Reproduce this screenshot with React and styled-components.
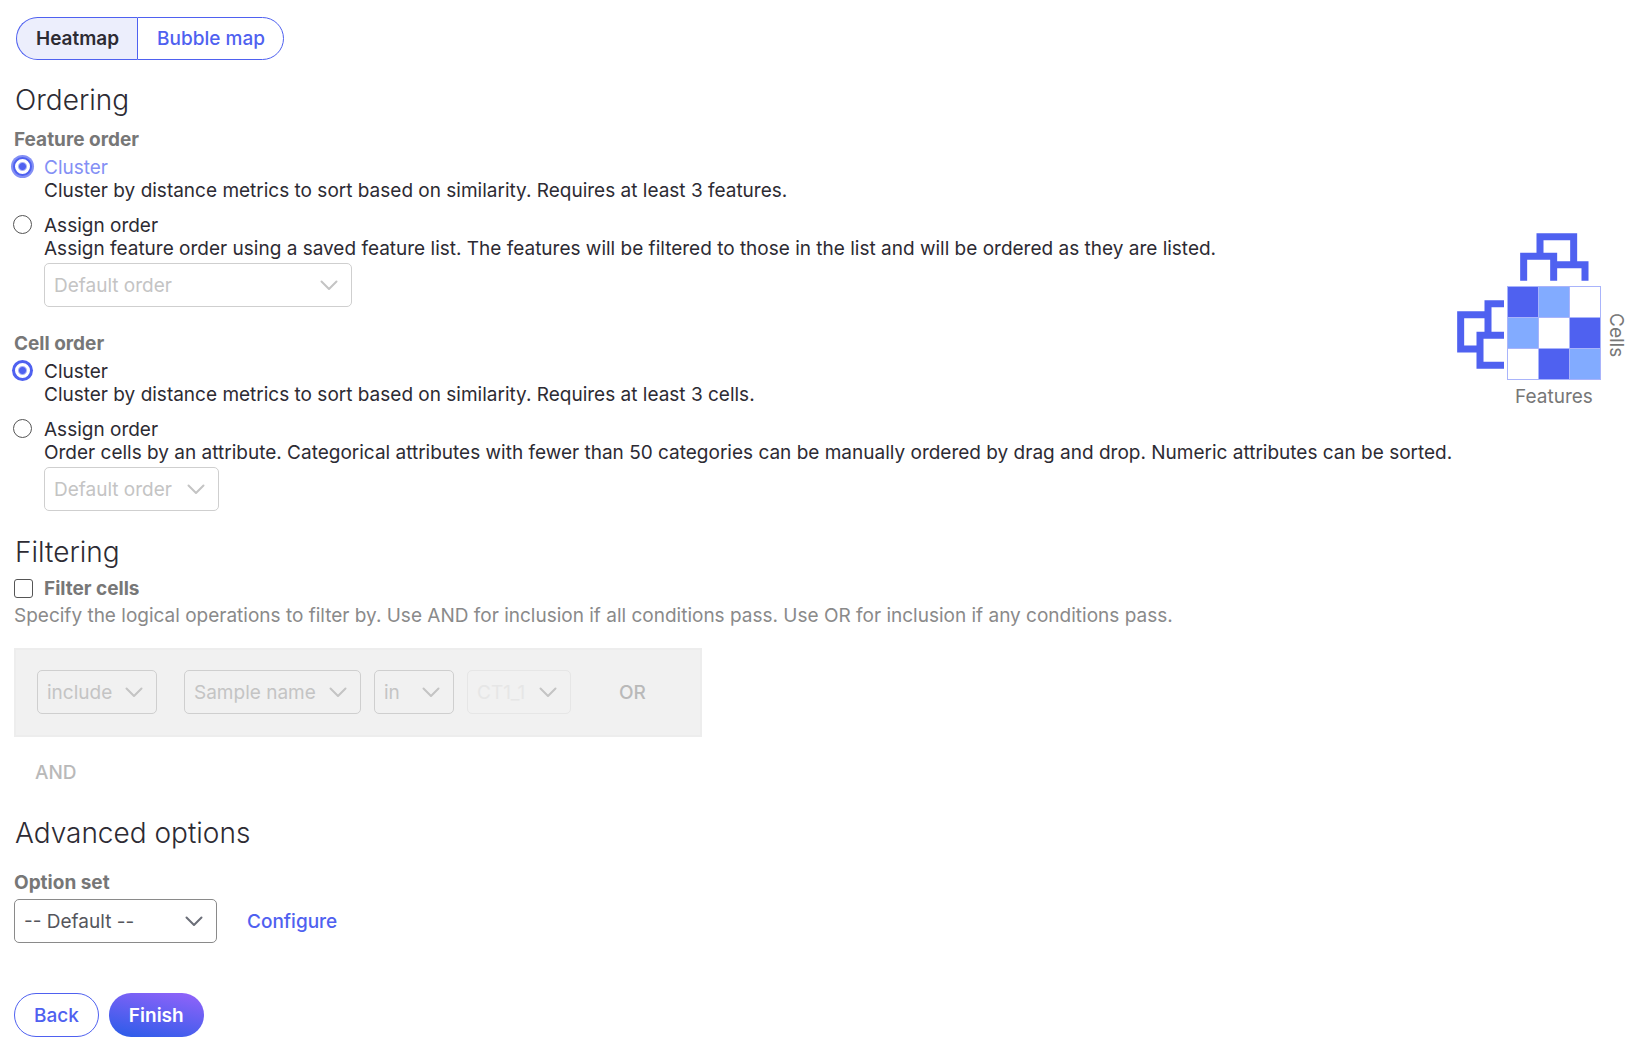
import React, { useState } from 'react';
import styled, { createGlobalStyle } from 'styled-components';

const GlobalStyle = createGlobalStyle`
  * {
    box-sizing: border-box;
  }
  body {
    background-color: #fff;
    color: #2d2b33;
    font-family: Inter, 'Liberation Sans', sans-serif;
    font-size: 19px;
    line-height: 23px;
    margin: 0;
  }
  button, select, input {
    font: inherit;
    margin: 0;
  }
`;

const Page = styled.main`
  padding: 17px 3px 6px 14px;
`;

const Segmented = styled.div`
  display: flex;
  margin-left: 2px;
`;

const Segment = styled.button`
  background-color: ${({ $active }) => ($active ? '#eceefc' : '#fff')};
  border: 1px solid #4f61f0;
  border-radius: ${({ $side }) => ($side === 'left' ? '22px 0 0 22px' : '0 22px 22px 0')};
  border-right-width: ${({ $side }) => ($side === 'left' ? '0' : '1px')};
  color: ${({ $active }) => ($active ? '#2d2b33' : '#4f61f0')};
  cursor: pointer;
  font-weight: ${({ $active }) => ($active ? 600 : 500)};
  height: 43px;
  padding: 0 18px 0 19px;
`;

const Title = styled.h2`
  font-size: 28px;
  font-weight: 300;
  line-height: 36px;
  margin: ${({ $top }) => $top}px 0 ${({ $bottom }) => $bottom || 0}px;
  padding-left: 1px;
`;

const Ordering = styled.section`
  align-items: center;
  display: flex;
  justify-content: space-between;
`;

const Group = styled.fieldset`
  border: 0;
  margin: 0 0 25px;
  min-width: 0;
  padding: 0;
  &:last-child {
    margin-bottom: 0;
  }
`;

const Legend = styled.legend`
  color: #777;
  font-weight: 700;
  margin-bottom: 5px;
  padding: 0;
`;

const Option = styled.div`
  column-gap: 11px;
  display: grid;
  grid-template-columns: 19px 1fr;
  & + & {
    margin-top: 12px;
  }
`;

const OptionLabel = styled.label`
  color: ${({ $focused }) => ($focused ? '#8490f5' : '#2d2b33')};
`;

const Radio = styled.input`
  appearance: none;
  background-color: #fff;
  border: 1px solid #555;
  border-radius: 50%;
  height: 19px;
  margin: 1px 0 0 -1px;
  width: 19px;
  &:checked {
    background-image: radial-gradient(circle, #4f61f0 3px, transparent 5px);
    border: 2px solid #4f61f0;
    box-shadow: 0 0 0 ${({ $focused }) => ($focused ? '2px #8490f5' : '1px #4f61f0')};
  }
`;

const OptionBody = styled.div`
  grid-column: 2;
`;

const Description = styled.p`
  margin: 0 0 3px;
`;

const SelectBox = styled.span`
  align-items: center;
  color: ${({ $muted }) => ($muted ? '#c4c4c4' : '#6b6e78')};
  display: inline-grid;
  width: ${({ $width }) => $width}px;
`;

const SelectInput = styled.select`
  appearance: none;
  background-color: transparent;
  border: 1px solid ${({ $tone }) => $tone.border};
  border-radius: 5px;
  color: ${({ $tone }) => $tone.text};
  grid-area: 1 / 1;
  height: 44px;
  opacity: 1;
  padding: 0 9px;
  width: 100%;
`;

const Chevron = styled.svg`
  fill: none;
  grid-area: 1 / 1;
  justify-self: end;
  margin-right: 14px;
  pointer-events: none;
  stroke: currentColor;
  stroke-linecap: round;
  stroke-linejoin: round;
  stroke-width: 2;
`;

const Figure = styled.figure`
  color: #777;
  column-gap: 4px;
  display: grid;
  flex: none;
  grid-template-columns: 144px 23px;
  margin: 2px 0 0;
  row-gap: 5px;
`;

const CellsAxis = styled.span`
  align-self: end;
  height: 90px;
  text-align: center;
  writing-mode: vertical-rl;
`;

const FeaturesAxis = styled.span`
  justify-self: end;
  text-align: center;
  width: 94px;
`;

const FilterToggle = styled.div`
  align-items: center;
  display: flex;
  gap: 11px;
`;

const FilterLabel = styled.label`
  color: #777;
  font-weight: 700;
`;

const Checkbox = styled.input`
  appearance: none;
  background-color: #fff;
  border: 1px solid #555;
  border-radius: 3px;
  height: 19px;
  width: 19px;
  &:checked {
    background-color: #4f61f0;
  }
`;

const Hint = styled.p`
  color: #8a8a8a;
  margin: 4px 0 21px;
`;

const Conditions = styled.div`
  align-items: center;
  background-color: #f1f1f1;
  border: 2px solid #ededed;
  display: flex;
  gap: 13px;
  max-width: 688px;
  padding: 20px 21px 21px;
`;

const Gap = styled.span`
  width: 1px;
`;

const LogicButton = styled.button`
  background: none;
  border: 0;
  color: #b9b9b9;
  font-weight: 500;
  padding: 0;
`;

const OrButton = styled(LogicButton)`
  margin-left: 35px;
`;

const AndButton = styled(LogicButton)`
  display: block;
  margin: 24px 0 0 21px;
`;

const FieldLabel = styled.label`
  color: #777;
  display: block;
  font-weight: 700;
  margin: 20px 0 5px;
`;

const FieldRow = styled.div`
  align-items: center;
  display: flex;
  gap: 30px;
`;

const Link = styled.a`
  color: #4f61f0;
  font-weight: 500;
  text-decoration: none;
`;

const Actions = styled.div`
  display: flex;
  gap: 10px;
  margin-top: 50px;
`;

const Action = styled.button`
  background: ${({ $primary }) => ($primary ? 'linear-gradient(192deg, #9563fa, #285ce8) border-box' : '#fff')};
  border: 1px solid ${({ $primary }) => ($primary ? 'transparent' : '#4f61f0')};
  border-radius: 22px;
  color: ${({ $primary }) => ($primary ? '#fff' : '#4f61f0')};
  cursor: pointer;
  font-weight: ${({ $primary }) => ($primary ? 600 : 500)};
  height: 44px;
  padding: 0 19px;
`;

const tones = {
  normal: { border: '#8a8a8a', text: '#55565c' },
  disabled: { border: '#cfcfcf', text: '#c4c4c4' },
  faint: { border: '#e6e6e6', text: '#e6e6e6' },
};

function Select({ id, label, value, width, tone = 'disabled' }) {
  return (
    <SelectBox $width={width} $muted={tone !== 'normal'}>
      <SelectInput id={id} aria-label={label} $tone={tones[tone]} disabled={tone !== 'normal'}>
        <option>{value}</option>
      </SelectInput>
      <Chevron width='18' height='11' viewBox='0 0 18 11' aria-hidden='true'>
        <path d='M1.5 1.5 9 9l7.5-7.5' />
      </Chevron>
    </SelectBox>
  );
}

function OrderGroup({ name, title, clusterText, assignText, selectWidth, highlight }) {
  const [order, setOrder] = useState('cluster');
  const focused = highlight && order === 'cluster';

  return (
    <Group>
      <Legend>{title}</Legend>
      <Option>
        <Radio
          type='radio'
          id={`${name}-cluster`}
          name={name}
          checked={order === 'cluster'}
          onChange={() => setOrder('cluster')}
          $focused={focused}
        />
        <OptionLabel htmlFor={`${name}-cluster`} $focused={focused}>Cluster</OptionLabel>
        <OptionBody>{clusterText}</OptionBody>
      </Option>
      <Option>
        <Radio
          type='radio'
          id={`${name}-assign`}
          name={name}
          checked={order === 'assign'}
          onChange={() => setOrder('assign')}
        />
        <OptionLabel htmlFor={`${name}-assign`}>Assign order</OptionLabel>
        <OptionBody>
          <Description>{assignText}</Description>
          <Select label={`${title} list`} value='Default order' width={selectWidth} />
        </OptionBody>
      </Option>
    </Group>
  );
}

function HeatmapFigure() {
  const dark = '#4f61f0';
  const light = '#82abff';
  const colors = [dark, light, '#fff', light, '#fff', dark, '#fff', dark, light];

  return (
    <Figure>
      <svg width='144' height='147' viewBox='78 69 432 441' aria-hidden='true'>
        <g fill='none' stroke={dark} strokeWidth='21'>
          <path d='M327 140V80H428V164' />
          <path d='M278 212V139H368V212' />
          <path d='M368 164H462V212' />
          <path d='M171 314H89V417H147' />
          <path d='M219 281H171V376' />
          <path d='M219 376H147V466H219' />
        </g>
        <rect x='228' y='228' width='282' height='282' fill='#a9b4fb' />
        {colors.map((color, index) => (
          <rect
            key={index}
            x={231 + (index % 3) * 93}
            y={231 + Math.floor(index / 3) * 93}
            width='90'
            height='90'
            fill={color}
          />
        ))}
      </svg>
      <CellsAxis>Cells</CellsAxis>
      <FeaturesAxis>Features</FeaturesAxis>
    </Figure>
  );
}

function App() {
  const [view, setView] = useState('heatmap');
  const [filterCells, setFilterCells] = useState(false);

  return (
    <Page>
      <GlobalStyle />
      <Segmented>
        <Segment type='button' $side='left' $active={view === 'heatmap'} onClick={() => setView('heatmap')}>Heatmap</Segment>
        <Segment type='button' $side='right' $active={view === 'bubble'} onClick={() => setView('bubble')}>Bubble map</Segment>
      </Segmented>

      <Title $top={22} $bottom={10}>Ordering</Title>
      <Ordering>
        <div>
          <OrderGroup
            name='feature-order'
            title='Feature order'
            clusterText='Cluster by distance metrics to sort based on similarity. Requires at least 3 features.'
            assignText='Assign feature order using a saved feature list. The features will be filtered to those in the list and will be ordered as they are listed.'
            selectWidth={308}
            highlight
          />
          <OrderGroup
            name='cell-order'
            title='Cell order'
            clusterText='Cluster by distance metrics to sort based on similarity. Requires at least 3 cells.'
            assignText='Order cells by an attribute. Categorical attributes with fewer than 50 categories can be manually ordered by drag and drop. Numeric attributes can be sorted.'
            selectWidth={175}
          />
        </div>
        <HeatmapFigure />
      </Ordering>

      <Title $top={23} $bottom={7}>Filtering</Title>
      <FilterToggle>
        <Checkbox
          type='checkbox'
          id='filter-cells'
          checked={filterCells}
          onChange={() => setFilterCells(!filterCells)}
        />
        <FilterLabel htmlFor='filter-cells'>Filter cells</FilterLabel>
      </FilterToggle>
      <Hint>Specify the logical operations to filter by. Use AND for inclusion if all conditions pass. Use OR for inclusion if any conditions pass.</Hint>
      <Conditions>
        <Select label='Inclusion' value='include' width={120} />
        <Gap />
        <Select label='Attribute' value='Sample name' width={177} />
        <Select label='Operator' value='in' width={80} />
        <Select label='Value' value='CT1_1' width={104} tone='faint' />
        <OrButton type='button' disabled>OR</OrButton>
      </Conditions>
      <AndButton type='button' disabled>AND</AndButton>

      <Title $top={31}>Advanced options</Title>
      <FieldLabel htmlFor='option-set'>Option set</FieldLabel>
      <FieldRow>
        <Select id='option-set' value='-- Default --' width={203} tone='normal' />
        <Link href='#configure'>Configure</Link>
      </FieldRow>

      <Actions>
        <Action type='button'>Back</Action>
        <Action type='button' $primary>Finish</Action>
      </Actions>
    </Page>
  );
}

export default App;
